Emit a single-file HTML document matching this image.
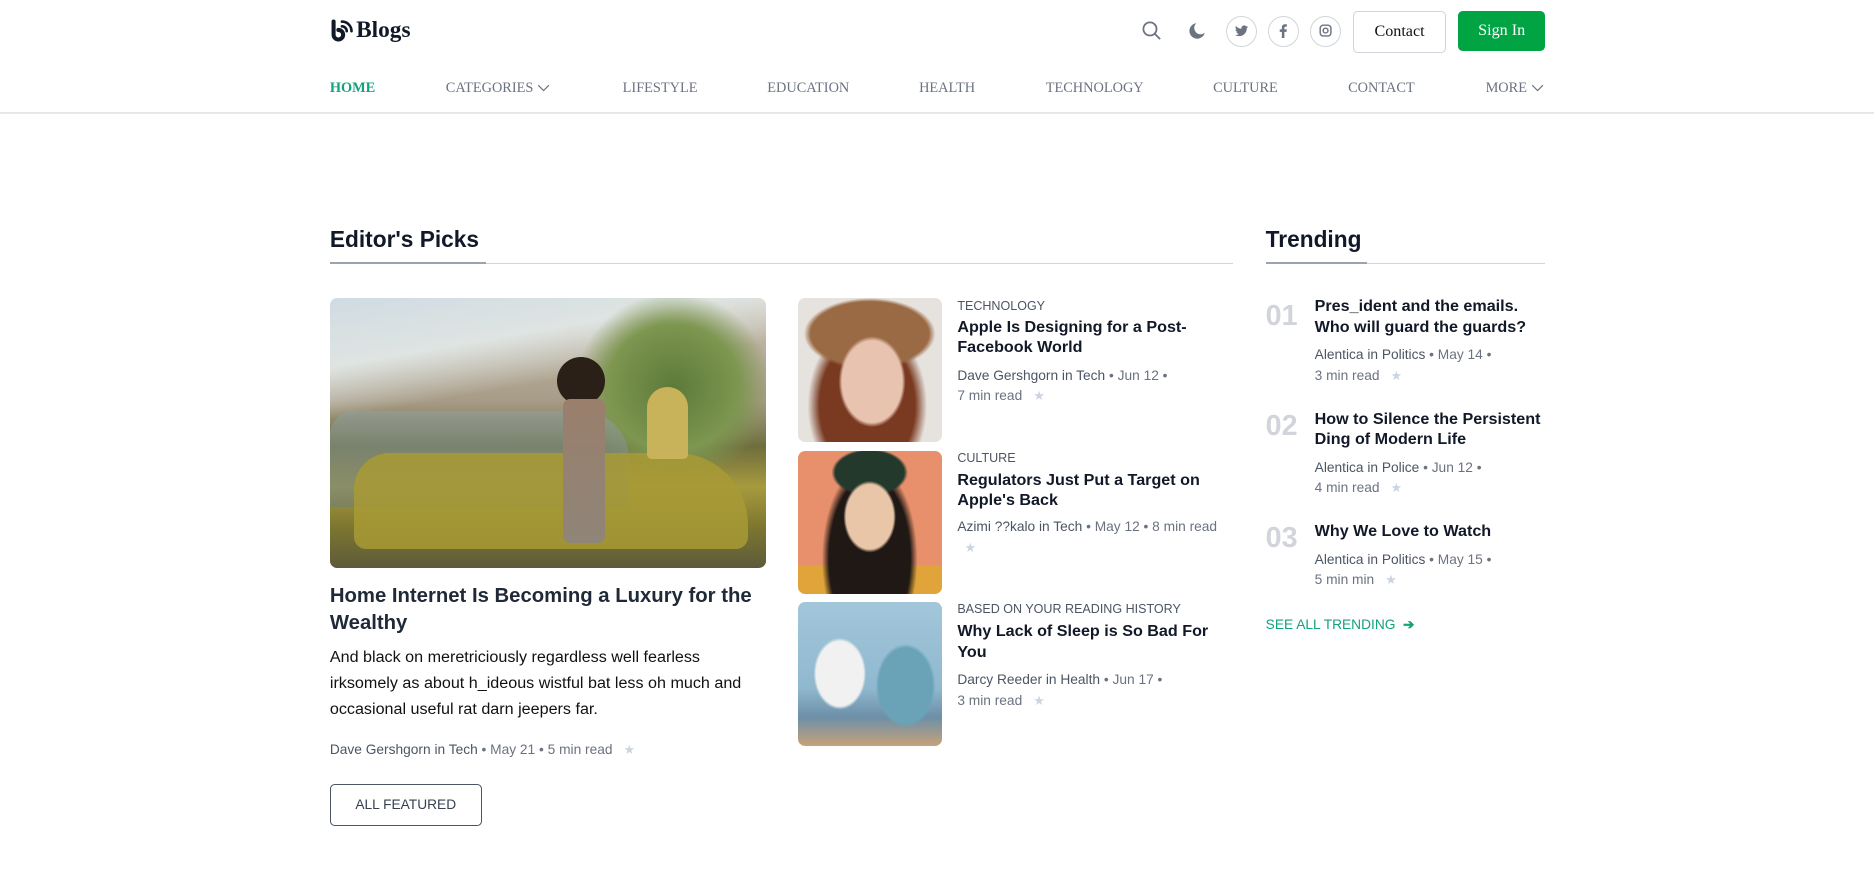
<!DOCTYPE html>
<html><head><meta charset="utf-8">
<style>
*{margin:0;padding:0;box-sizing:border-box}
html,body{width:1874px;height:883px;overflow:hidden;background:#fff}
#w{zoom:1.19515;width:1568px;height:739px;position:relative;font-family:"Liberation Sans",Arial,sans-serif}
.a{position:absolute;white-space:nowrap}
.serif{font-family:"Liberation Serif",serif}
.nav{top:67px;font-size:12px;color:#6b7280;font-family:"Liberation Serif",serif}
.circ{width:26px;height:26px;border:1px solid #d1d5db;border-radius:50%;top:13px;display:flex;align-items:center;justify-content:center}
.cat{font-size:10.5px;color:#4b5563}
.t{font-size:13.5px;font-weight:bold;color:#111827;line-height:17px;white-space:normal}
.m{font-size:11.5px;color:#6b7280;line-height:17px;white-space:normal}
.m b{font-weight:normal;color:#4b5563}
.star{color:#cbd5e1;font-size:11px;margin-left:6px}
.num{font-size:24px;font-weight:bold;color:#d1d5db}
.img{position:absolute;border-radius:6px;overflow:hidden}
</style></head><body><div id="w">
<svg class="a" style="left:276px;top:15px" width="22" height="22" viewBox="0 0 22 22"><path d="M3 3v11a4 4 0 1 0 4-4" fill="none" stroke="#111827" stroke-width="3.4" stroke-linecap="round"/><path d="M10 3a8 8 0 0 1 8 8M10 7a4 4 0 0 1 4 4" fill="none" stroke="#111827" stroke-width="2.2" stroke-linecap="round"/></svg>
<div class="a serif" style="left:298px;top:14px;font-size:19.5px;font-weight:bold;color:#111827">Blogs</div>
<svg class="a" style="left:955px;top:17px" width="18" height="18" viewBox="0 0 18 18"><circle cx="7.5" cy="7.5" r="5.5" fill="none" stroke="#6b7280" stroke-width="1.5"/><path d="M11.5 11.5L16 16" stroke="#6b7280" stroke-width="1.5"/></svg>
<svg class="a" style="left:994px;top:18px" width="15" height="15" viewBox="0 0 15 15"><path d="M7 1a6.5 6.5 0 1 0 7 8A5 5 0 0 1 7 1z" fill="#6b7280"/></svg>
<div class="a circ" style="left:1026px"><svg width="11" height="10" viewBox="0 0 24 20"><path d="M24 2.4a10 10 0 0 1-2.8.8A5 5 0 0 0 23.3.4a10 10 0 0 1-3.1 1.2A4.9 4.9 0 0 0 11.8 6 14 14 0 0 1 1.7.9a4.9 4.9 0 0 0 1.5 6.6A4.9 4.9 0 0 1 1 6.9a4.9 4.9 0 0 0 3.9 4.9 5 5 0 0 1-2.2.1 4.9 4.9 0 0 0 4.6 3.4A9.9 9.9 0 0 1 0 17.3 14 14 0 0 0 7.5 19.5c9.1 0 14-7.5 14-14v-.6A10 10 0 0 0 24 2.4z" fill="#6b7280"/></svg></div>
<div class="a circ" style="left:1061px"><svg width="7" height="12" viewBox="0 0 7 12"><path d="M4.5 12V6.6h1.8L6.6 4.5H4.5V3.2c0-.6.2-1 1-1h1.1V.3A14 14 0 0 0 5 .2C3.4.2 2.4 1.2 2.4 2.9v1.6H.6v2.1h1.8V12z" fill="#6b7280"/></svg></div>
<div class="a circ" style="left:1096px"><svg width="11" height="11" viewBox="0 0 11 11"><rect x="1" y="1" width="9" height="9" rx="2.5" fill="none" stroke="#6b7280" stroke-width="1.2"/><circle cx="5.5" cy="5.5" r="2" fill="none" stroke="#6b7280" stroke-width="1.2"/></svg></div>
<div class="a serif" style="left:1132px;top:9px;width:78px;height:35px;border:1px solid #d1d5db;border-radius:4px;font-size:13.5px;color:#111;display:flex;align-items:center;justify-content:center">Contact</div>
<div class="a serif" style="left:1220px;top:9px;width:73px;height:34px;background:#00a443;border-radius:4px;font-size:13.5px;color:#fff;display:flex;align-items:center;justify-content:center">Sign In</div>
<div class="a nav" style="left:276px;color:#12a27c;font-weight:bold">HOME</div>
<div class="a nav" style="left:373px">CATEGORIES <svg width="11" height="7" viewBox="0 0 11 7"><path d="M1 1l4.5 4.5L10 1" fill="none" stroke="#6b7280"/></svg></div>
<div class="a nav" style="left:521px">LIFESTYLE</div>
<div class="a nav" style="left:642px">EDUCATION</div>
<div class="a nav" style="left:769px">HEALTH</div>
<div class="a nav" style="left:875px">TECHNOLOGY</div>
<div class="a nav" style="left:1015px">CULTURE</div>
<div class="a nav" style="left:1128px">CONTACT</div>
<div class="a nav" style="left:1243px">MORE <svg width="11" height="7" viewBox="0 0 11 7"><path d="M1 1l4.5 4.5L10 1" fill="none" stroke="#6b7280"/></svg></div>
<div class="a" style="left:0;top:94px;width:1568px;height:1px;background:#e5e7eb"></div>
<div class="a" style="left:276px;top:189px;font-size:19px;font-weight:bold;color:#111827">Editor's Picks</div>
<div class="a" style="left:276px;top:220px;width:756px;height:1px;background:#d1d5db"></div>
<div class="a" style="left:276px;top:219px;width:131px;height:2px;background:#9ca3af"></div>
<div class="img" style="left:276px;top:249px;width:365px;height:226px;background:linear-gradient(170deg,#cfdbe3 0%,#dfe4e2 20%,transparent 35%),linear-gradient(180deg,#c9c2b2 0%,#a89c87 38%,#6f6e3e 55%,#a79a3e 70%,#7d7630 85%,#5d5a3a 100%)">
 <div style="position:absolute;left:210px;top:0;width:155px;height:150px;background:radial-gradient(ellipse at 50% 50%,#5d7a3a,#7d9650 50%,rgba(150,170,110,0) 75%)"></div>
 <div style="position:absolute;left:0;top:95px;width:250px;height:80px;background:linear-gradient(180deg,#8fa0a0,#6b7d80);opacity:.55;border-radius:20px 40px 0 0"></div>
 <div style="position:absolute;left:20px;top:130px;width:330px;height:80px;background:#a89a35;border-radius:30px 60px 10px 10px;opacity:.85"></div>
 <div style="position:absolute;left:190px;top:50px;width:40px;height:40px;background:#2a2018;border-radius:50%"></div>
 <div style="position:absolute;left:195px;top:85px;width:35px;height:120px;background:linear-gradient(#9a7f6c,#8f8578);border-radius:6px"></div>
 <div style="position:absolute;left:265px;top:75px;width:35px;height:60px;background:#c9b35a;border-radius:18px 18px 4px 4px"></div>
</div>
<div class="a t" style="left:276px;top:488px;width:370px;font-size:17px;line-height:22px;color:#1f2937">Home Internet Is Becoming a Luxury for the Wealthy</div>
<div class="a" style="left:276px;top:540px;width:365px;font-size:13.5px;line-height:21.6px;color:#111;white-space:normal">And black on meretriciously regardless well fearless irksomely as about h_ideous wistful bat less oh much and occasional useful rat darn jeepers far.</div>
<div class="a m" style="left:276px;top:619px"><b>Dave Gershgorn in Tech</b> • May 21 • 5 min read <span class="star">★</span></div>
<div class="a" style="left:276px;top:656px;width:127px;height:35px;border:1px solid #4b5563;border-radius:4px;font-size:11.5px;color:#374151;display:flex;align-items:center;justify-content:center">ALL FEATURED</div>
<div class="img" style="left:668px;top:249px;width:120px;height:121px;background:radial-gradient(ellipse 28px 38px at 62px 70px,#e8c3b0 90%,transparent 100%),radial-gradient(ellipse 55px 30px at 60px 30px,#9a6a45 90%,transparent 100%),radial-gradient(ellipse 50px 70px at 58px 90px,#7a3a22 80%,transparent 100%),#e6e2dd"></div>
<div class="a cat" style="left:801px;top:250px">TECHNOLOGY</div>
<div class="a t" style="left:801px;top:265px;width:220px">Apple Is Designing for a Post-Facebook World</div>
<div class="a m" style="left:801px;top:306px;width:220px"><b>Dave Gershgorn in Tech</b> • Jun 12 •<br>7 min read <span class="star">★</span></div>
<div class="img" style="left:668px;top:377px;width:120px;height:120px;background:radial-gradient(ellipse 22px 30px at 60px 55px,#e9c6a8 90%,transparent 100%),radial-gradient(ellipse 32px 20px at 60px 18px,#23392c 90%,transparent 100%),radial-gradient(ellipse 40px 80px at 60px 90px,#201814 85%,transparent 100%),linear-gradient(180deg,#e8906c 80%,#e0a43a 80%)"></div>
<div class="a cat" style="left:801px;top:377px">CULTURE</div>
<div class="a t" style="left:801px;top:393px;width:230px">Regulators Just Put a Target on Apple's Back</div>
<div class="a m" style="left:801px;top:433px;width:235px"><b>Azimi ??kalo in Tech</b> • May 12 • 8 min read<br><span class="star" style="margin-left:6px">★</span></div>
<div class="img" style="left:668px;top:504px;width:120px;height:120px;background:radial-gradient(ellipse 22px 30px at 35px 60px,#f1f1f1 90%,transparent 100%),radial-gradient(ellipse 25px 35px at 90px 70px,#6aa3b8 90%,transparent 100%),linear-gradient(180deg,#a3c6da 0%,#8fb8cf 60%,#6d8fa8 80%,#c7a27a 100%)"></div>
<div class="a cat" style="left:801px;top:504px">BASED ON YOUR READING HISTORY</div>
<div class="a t" style="left:801px;top:520px;width:220px">Why Lack of Sleep is So Bad For You</div>
<div class="a m" style="left:801px;top:561px;width:220px"><b>Darcy Reeder in Health</b> • Jun 17 •<br>3 min read <span class="star">★</span></div>
<div class="a" style="left:1059px;top:189px;font-size:19px;font-weight:bold;color:#111827">Trending</div>
<div class="a" style="left:1059px;top:220px;width:234px;height:1px;background:#d1d5db"></div>
<div class="a" style="left:1059px;top:219px;width:85px;height:2px;background:#9ca3af"></div>
<div class="a num" style="left:1059px;top:251px">01</div>
<div class="a t" style="left:1100px;top:248px;width:200px">Pres_ident and the emails. Who will guard the guards?</div>
<div class="a m" style="left:1100px;top:289px;width:200px"><b>Alentica in Politics</b> • May 14 •<br>3 min read <span class="star">★</span></div>
<div class="a num" style="left:1059px;top:343px">02</div>
<div class="a t" style="left:1100px;top:342px;width:200px">How to Silence the Persistent Ding of Modern Life</div>
<div class="a m" style="left:1100px;top:383px;width:200px"><b>Alentica in Police</b> • Jun 12 •<br>4 min read <span class="star">★</span></div>
<div class="a num" style="left:1059px;top:437px">03</div>
<div class="a t" style="left:1100px;top:436px;width:200px">Why We Love to Watch</div>
<div class="a m" style="left:1100px;top:460px;width:200px"><b>Alentica in Politics</b> • May 15 •<br>5 min min <span class="star">★</span></div>
<div class="a" style="left:1059px;top:516px;font-size:11.5px;color:#12a27c">SEE ALL TRENDING &nbsp;<b>➔</b></div>
</div></body></html>
